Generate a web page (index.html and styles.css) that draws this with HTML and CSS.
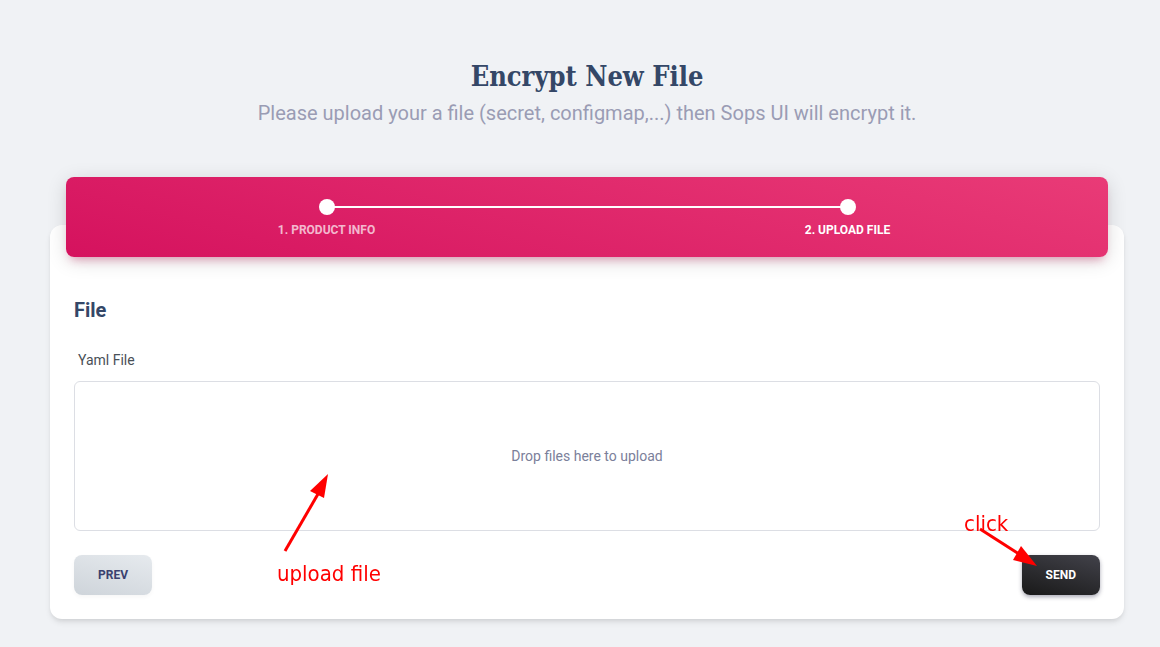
FILE: index.html
```html
<!DOCTYPE html>
<html lang="en">
<head>
<meta charset="utf-8">
<meta name="viewport" content="width=device-width, initial-scale=1">
<title>Encrypt New File</title>
<link rel="stylesheet" href="styles.css">
</head>
<body>
<main class="page">
  <header class="intro">
    <h1 class="intro-title">Encrypt New File</h1>
    <p class="intro-text">Please upload your a file (secret, configmap,...) then Sops UI will encrypt it.</p>
  </header>
  <form class="card">
    <ol class="steps">
      <li class="step">1. Product Info</li>
      <li class="step step-active">2. Upload File</li>
    </ol>
    <section class="panel">
      <h2 class="panel-title">File</h2>
      <label class="field-label" for="yaml">Yaml File</label>
      <div class="dropzone">
        <span>Drop files here to upload</span>
        <input class="dropzone-input" id="yaml" type="file">
      </div>
      <div class="actions">
        <button class="btn btn-light" type="button">Prev</button>
        <button class="btn btn-dark" type="submit">Send</button>
      </div>
    </section>
    <div class="note note-upload">
      <svg class="arrow" width="48" height="82" viewBox="0 0 48 82" aria-hidden="true">
        <path d="M2 79 35 22" stroke="red" stroke-width="3"/>
        <path d="M45 2 27 19 41 26Z" fill="red"/>
      </svg>
      <span>upload file</span>
    </div>
    <div class="note note-click">
      <span>click</span>
      <svg class="arrow" width="60" height="42" viewBox="0 0 60 42" aria-hidden="true">
        <path d="M2 2 41 27" stroke="red" stroke-width="3"/>
        <path d="M59 39 43 19 35 33Z" fill="red"/>
      </svg>
    </div>
  </form>
</main>
</body>
</html>
```
FILE: styles.css
```css
* {
  box-sizing: border-box;
}

body {
  margin: 0;
  background: #f0f2f5;
  color: #344767;
  font-family: Roboto, "Liberation Sans", sans-serif;
}

.page {
  padding: 55px 36px 28px 50px;
}

.intro {
  text-align: center;
}

.intro-title {
  margin: 0;
  font-family: "Roboto Slab", "DejaVu Serif Condensed", "DejaVu Serif", serif;
  font-size: 27px;
  font-weight: 700;
  line-height: 44px;
}

.intro-text {
  margin: 0;
  color: #9a9cb4;
  font-size: 20px;
  line-height: 28px;
}

.card {
  position: relative;
  margin-top: 98px;
  padding: 0 24px 24px;
  border-radius: 12px;
  background: #fff;
  box-shadow: 0 4px 6px -1px rgba(0, 0, 0, 0.1), 0 2px 4px -1px rgba(0, 0, 0, 0.06);
}

.steps {
  display: flex;
  margin: 0 -8px;
  padding: 22px 0 18px;
  list-style: none;
  border-radius: 8px;
  background: linear-gradient(195deg, #e93b77, #d5125e);
  box-shadow: 0 4px 20px rgba(0, 0, 0, 0.14), 0 7px 10px -5px rgba(216, 27, 96, 0.4);
  transform: translateY(-48px);
}

.step {
  position: relative;
  flex: 1;
  padding-top: 22px;
  color: rgba(255, 255, 255, 0.7);
  font-size: 12px;
  font-weight: 700;
  line-height: 18px;
  text-align: center;
  text-transform: uppercase;
}

.step::before {
  content: "";
  position: absolute;
  top: 0;
  left: calc(50% - 8px);
  width: 16px;
  height: 16px;
  border-radius: 50%;
  background: #fff;
}

.step-active {
  color: #fff;
}

.step-active::after {
  content: "";
  position: absolute;
  top: 7px;
  right: 50%;
  width: 100%;
  height: 2px;
  background: #fff;
}

.panel {
  margin-top: -9px;
}

.panel-title {
  margin: 0 0 24px;
  font-size: 20px;
  font-weight: 700;
  line-height: 28px;
}

.field-label {
  display: block;
  margin: 0 4px 9px;
  color: #495057;
  font-size: 14px;
  line-height: 24px;
}

.dropzone {
  position: relative;
  display: grid;
  place-items: center;
  min-height: 150px;
  border: 1px solid #dcdee4;
  border-radius: 6px;
  color: #7b809a;
  font-size: 14px;
  line-height: 18px;
}

.dropzone-input {
  position: absolute;
  inset: 0;
  width: 100%;
  height: 100%;
  opacity: 0;
}

.actions {
  display: flex;
  justify-content: space-between;
  margin-top: 24px;
}

.btn {
  padding: 11px 24px;
  border: 0;
  border-radius: 8px;
  font-family: inherit;
  font-size: 12px;
  font-weight: 700;
  line-height: 18px;
  text-transform: uppercase;
}

.btn-light {
  background: linear-gradient(195deg, #e6eaee, #ced4da);
  color: #3a416f;
  box-shadow: 0 2px 4px rgba(0, 0, 0, 0.04);
}

.btn-dark {
  background: linear-gradient(195deg, #42424a, #191919);
  color: #fff;
  box-shadow: 0 2px 4px rgba(40, 40, 70, 0.4);
}

.note {
  position: absolute;
  color: #f00;
  font-family: "DejaVu Sans Condensed", "DejaVu Sans", sans-serif;
  font-size: 22px;
  line-height: 30px;
  pointer-events: none;
}

.note .arrow {
  display: block;
  fill: none;
}

.note-upload {
  left: 227px;
  bottom: 30px;
}

.note-upload .arrow {
  margin: 0 0 5px 6px;
}

.note-click {
  right: 86px;
  bottom: 50px;
}

.note-click .arrow {
  margin: -12px 0 0 14px;
}
```
